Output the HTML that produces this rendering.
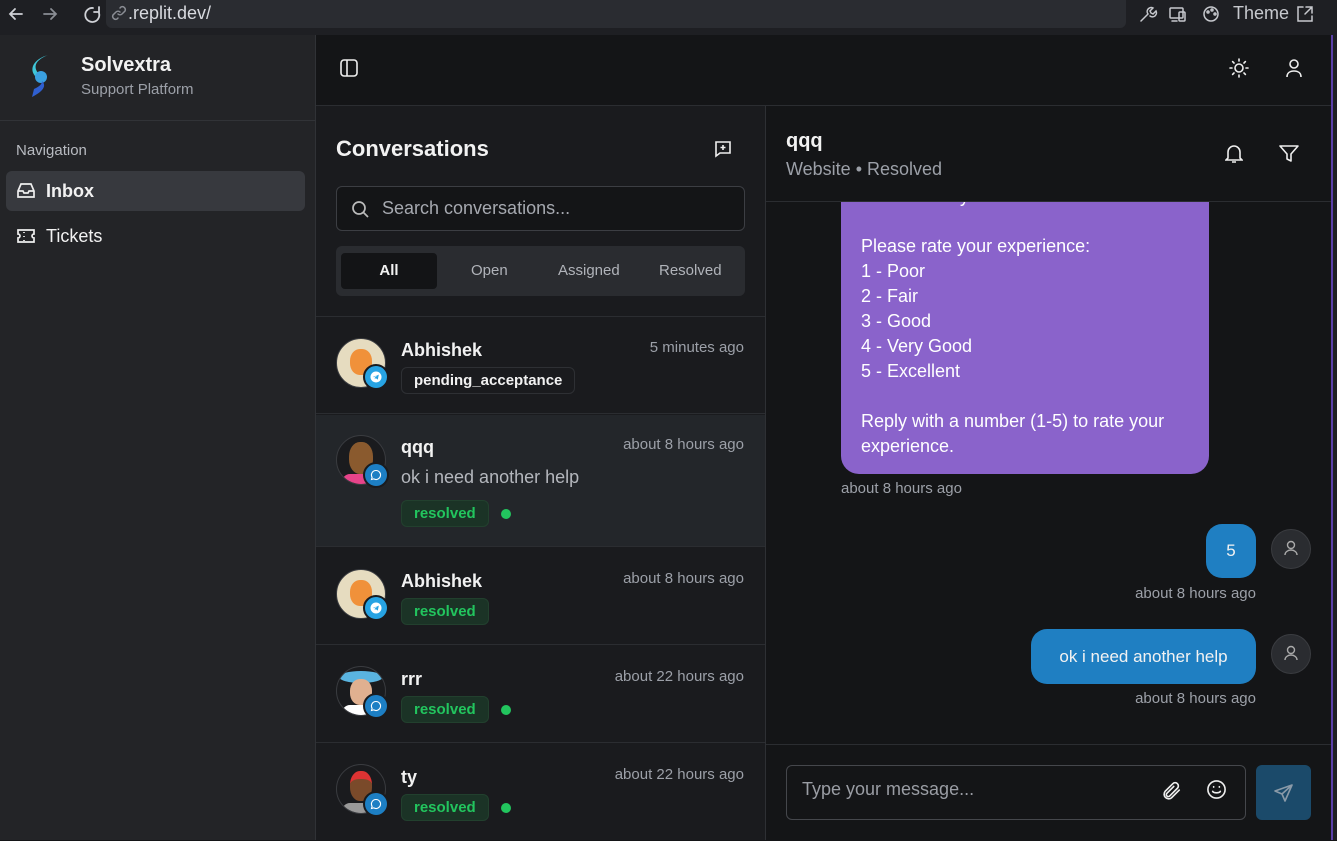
<!DOCTYPE html>
<html><head><meta charset="utf-8"><style>
*{box-sizing:border-box;margin:0;padding:0}
body{width:1337px;height:840px;overflow:hidden;background:#141517;font-family:"Liberation Sans",sans-serif;color:#f2f2f2;position:relative}
.abs{position:absolute}
svg{display:block}
.muted{color:#9ca0a8}
.badge{position:absolute;border:1px solid #2e3034;border-radius:6px;font-weight:bold;font-size:15px;padding:0 12px;height:27px;line-height:25px}
.res{background:#1b3326;border-color:#22402e;color:#22c55e}
.dot{position:absolute;width:10px;height:10px;border-radius:50%;background:#22c55e}
.av{position:absolute;width:50px;height:50px;border-radius:50%;border:1px solid #3a3c40;overflow:hidden}
.ch{position:absolute;width:26px;height:26px;border-radius:50%;background:#1d7fc4;border:2px solid #1a1b1e}
.ch svg{position:absolute;left:5px;top:5px}
.tg{background:#27a3e3}
.row .name{position:absolute;font-size:18px;font-weight:bold}
.row .time{position:absolute;right:21px;font-size:15px;color:#9ca0a8}
</style></head><body>
<svg width="0" height="0" style="position:absolute"><defs>
<symbol id="tg" viewBox="0 0 12 12"><circle cx="6" cy="6" r="5.5" fill="#fff"/><path d="M2.8 6l6-2.4-1 5-2-1.5-1 1v-1.5l3-2.5-3.8 2z" fill="#27a3e3"/></symbol>
<symbol id="cb" viewBox="0 0 12 12"><path d="M6 1.5a4.5 4.5 0 1 1-2.2 8.4L1.5 10.5l.6-2.2A4.5 4.5 0 0 1 6 1.5z" fill="none" stroke="#fff" stroke-width="1.1"/></symbol>
</defs></svg>
<!-- browser bar -->
<div class="abs" style="left:0;top:0;width:1337px;height:35px;background:#1e1f23"></div>
<div class="abs" style="left:106px;top:0;width:1020px;height:28px;background:#2a2c31;border-radius:0 0 6px 6px"></div>
<svg class="abs" style="left:6px;top:4px" width="110" height="20" viewBox="0 0 110 20" fill="none" stroke="#cfd1d6" stroke-width="1.8" stroke-linecap="round"><path d="M16 10H4M9 5L4 10l5 5"/><path d="M38 10h12M45 5l5 5-5 5" stroke="#8a8d94"/><path d="M87 4a7 7 0 1 0 6 5M93 3v5h-5"/></svg>
<svg class="abs" style="left:111px;top:5px" width="16" height="16" viewBox="0 0 16 16" fill="none" stroke="#8a8d94" stroke-width="1.5" stroke-linecap="round"><path d="M7 9a3 3 0 0 0 4 0l3-3a3 3 0 0 0-4-4l-1 1M9 7a3 3 0 0 0-4 0L2 10a3 3 0 0 0 4 4l1-1"/></svg>
<div class="abs" style="left:128px;top:3px;font-size:18px;color:#d8dadf">.replit.dev/</div>
<svg class="abs" style="left:1138px;top:4px" width="180" height="20" viewBox="0 0 180 20" fill="none" stroke="#c7c9ce" stroke-width="1.5" stroke-linecap="round"><path d="M3 17l7-7M10 10a4 4 0 0 1 5-6l-3 3 1 2 2 1 3-3a4 4 0 0 1-6 5"/><rect x="32" y="4" width="13" height="10" rx="1"/><path d="M34 17h5"/><rect x="41" y="8" width="6" height="9" rx="1"/><circle cx="73" cy="10" r="7"/><circle cx="70" cy="8" r="1"/><circle cx="74" cy="6" r="1"/><circle cx="77" cy="10" r="1"/><path d="M165 3h-5v14h14v-5M168 3h6v6M174 3l-7 7"/></svg>
<div class="abs" style="left:1233px;top:3px;font-size:18px;color:#c7c9ce">Theme</div>
<!-- sidebar -->
<div class="abs" style="left:0;top:35px;width:316px;height:805px;background:#232427;border-right:1px solid #303236"></div>
<svg class="abs" style="left:28px;top:55px" width="24" height="44" viewBox="0 0 24 44"><path d="M20 0C10 4 4 10 10 18L8 22C0 14 6 4 20 0Z" fill="#3fc6d8"/><circle cx="13" cy="22" r="6" fill="#3aa0e0"/><path d="M14 26c6 6-2 12-10 16l2-8c4-2 8-4 8-8z" fill="#2f5fd0"/></svg>
<div class="abs" style="left:81px;top:54px;font-size:20px;font-weight:bold">Solvextra</div>
<div class="abs muted" style="left:81px;top:81px;font-size:15px">Support Platform</div>
<div class="abs" style="left:0;top:120px;width:316px;height:1px;background:#313337"></div>
<div class="abs muted" style="left:16px;top:142px;font-size:15px;color:#b8bbc1">Navigation</div>
<div class="abs" style="left:6px;top:171px;width:299px;height:40px;background:#37393e;border-radius:6px"></div>
<svg class="abs" style="left:16px;top:182px" width="20" height="18" viewBox="0 0 20 18" fill="none" stroke="#eee" stroke-width="1.7"><path d="M2 9l3-7h10l3 7v6H2zM2 9h5l1 2h4l1-2h5"/></svg>
<div class="abs" style="left:46px;top:181px;font-size:18px;font-weight:bold">Inbox</div>
<svg class="abs" style="left:16px;top:227px" width="20" height="18" viewBox="0 0 20 18" fill="none" stroke="#eee" stroke-width="1.7"><path d="M2 3h16v4a2 2 0 0 0 0 4v4H2v-4a2 2 0 0 0 0-4zM8 5v1M8 9v1M8 13v1"/></svg>
<div class="abs" style="left:46px;top:226px;font-size:18px">Tickets</div>
<!-- top header -->
<div class="abs" style="left:316px;top:105px;width:1015px;height:1px;background:#2b2d31"></div>
<svg class="abs" style="left:340px;top:59px" width="18" height="18" viewBox="0 0 18 18" fill="none" stroke="#eee" stroke-width="1.6"><rect x="1" y="1" width="16" height="16" rx="3"/><path d="M7 1v16"/></svg>
<svg class="abs" style="left:1229px;top:58px" width="20" height="20" viewBox="0 0 20 20" fill="none" stroke="#eee" stroke-width="1.6" stroke-linecap="round"><circle cx="10" cy="10" r="4"/><path d="M10 1v2M10 17v2M1 10h2M17 10h2M3.6 3.6l1.4 1.4M15 15l1.4 1.4M3.6 16.4L5 15M15 5l1.4-1.4"/></svg>
<svg class="abs" style="left:1285px;top:58px" width="18" height="20" viewBox="0 0 18 20" fill="none" stroke="#eee" stroke-width="1.6"><circle cx="9" cy="6" r="4"/><path d="M2 19c0-4 3-6 7-6s7 2 7 6"/></svg>
<!-- conversation panel -->
<div class="abs" style="left:316px;top:106px;width:450px;height:734px;background:#1a1b1e;border-right:1px solid #2e3034"></div>
<div class="abs" style="left:336px;top:136px;font-size:22px;font-weight:bold">Conversations</div>
<svg class="abs" style="left:713px;top:139px" width="20" height="20" viewBox="0 0 20 20" fill="none" stroke="#eee" stroke-width="1.6"><path d="M3 3h14v11H7l-4 3z"/><path d="M10 6v5M7.5 8.5h5"/></svg>
<div class="abs" style="left:336px;top:186px;width:409px;height:45px;border:1px solid #3c3e43;border-radius:6px;background:#141517"></div>
<svg class="abs" style="left:351px;top:200px" width="18" height="18" viewBox="0 0 18 18" fill="none" stroke="#bbb" stroke-width="1.7"><circle cx="8" cy="8" r="6"/><path d="M12.5 12.5L17 17"/></svg>
<div class="abs muted" style="left:382px;top:198px;font-size:18px;color:#a6a9b0">Search conversations...</div>
<div class="abs" style="left:336px;top:246px;width:409px;height:50px;background:#2a2c30;border-radius:6px"></div>
<div class="abs" style="left:341px;top:253px;width:96px;height:36px;background:#131416;border-radius:4px"></div>
<div class="abs" style="left:341px;top:262px;width:96px;text-align:center;font-size:15px;font-weight:bold">All</div>
<div class="abs muted" style="left:471px;top:262px;font-size:15px;color:#b0b3b9">Open</div>
<div class="abs muted" style="left:558px;top:262px;font-size:15px;color:#b0b3b9">Assigned</div>
<div class="abs muted" style="left:659px;top:262px;font-size:15px;color:#b0b3b9">Resolved</div>
<div class="abs" style="left:316px;top:316px;width:449px;height:1px;background:#2b2d31"></div>
<!-- rows -->
<div class="abs row" style="left:316px;top:317px;width:449px;height:97px;border-bottom:1px solid #2b2d31">
 <div class="av" style="left:20px;top:21px;background:#e6dcc0"><div style="position:absolute;left:13px;top:10px;width:22px;height:26px;border-radius:45%;background:#f0913a"></div></div>
 <div class="ch tg" style="left:47px;top:47px"><svg width="12" height="12"><use href="#tg"/></svg></div>
 <div class="name" style="left:85px;top:23px">Abhishek</div><div class="time" style="top:22px">5 minutes ago</div>
 <div class="badge" style="left:85px;top:50px">pending_acceptance</div></div>
<div class="abs row" style="left:316px;top:415px;width:449px;height:132px;background:#23262a;border-bottom:1px solid #2b2d31">
 <div class="av" style="left:20px;top:20px;background:#1a1b1e"><div style="position:absolute;left:12px;top:6px;width:24px;height:32px;border-radius:45%;background:#8a5a2e"></div><div style="position:absolute;left:5px;top:38px;width:40px;height:14px;background:#e6448a;border-radius:8px 8px 0 0"></div></div>
 <div class="ch" style="left:47px;top:47px"><svg width="12" height="12"><use href="#cb"/></svg></div>
 <div class="name" style="left:85px;top:22px">qqq</div><div class="time" style="top:21px">about 8 hours ago</div>
 <div class="abs" style="left:85px;top:52px;font-size:18px;color:#b4b7bd">ok i need another help</div>
 <div class="badge res" style="left:85px;top:85px">resolved</div><div class="dot" style="left:185px;top:94px"></div></div>
<div class="abs row" style="left:316px;top:548px;width:449px;height:97px;border-bottom:1px solid #2b2d31">
 <div class="av" style="left:20px;top:21px;background:#e6dcc0"><div style="position:absolute;left:13px;top:10px;width:22px;height:26px;border-radius:45%;background:#f0913a"></div></div>
 <div class="ch tg" style="left:47px;top:47px"><svg width="12" height="12"><use href="#tg"/></svg></div>
 <div class="name" style="left:85px;top:23px">Abhishek</div><div class="time" style="top:22px">about 8 hours ago</div>
 <div class="badge res" style="left:85px;top:50px">resolved</div></div>
<div class="abs row" style="left:316px;top:646px;width:449px;height:97px;border-bottom:1px solid #2b2d31">
 <div class="av" style="left:20px;top:20px;background:#1a1b1e"><div style="position:absolute;left:2px;top:4px;width:44px;height:12px;border-radius:50%;background:#5ab4e0"></div><div style="position:absolute;left:13px;top:12px;width:22px;height:26px;border-radius:45%;background:#e0b090"></div><div style="position:absolute;left:5px;top:38px;width:40px;height:14px;background:#fff;border-radius:8px 8px 0 0"></div></div>
 <div class="ch" style="left:47px;top:47px"><svg width="12" height="12"><use href="#cb"/></svg></div>
 <div class="name" style="left:85px;top:23px">rrr</div><div class="time" style="top:22px">about 22 hours ago</div>
 <div class="badge res" style="left:85px;top:50px">resolved</div><div class="dot" style="left:185px;top:59px"></div></div>
<div class="abs row" style="left:316px;top:744px;width:449px;height:97px">
 <div class="av" style="left:20px;top:20px;background:#1a1b1e"><div style="position:absolute;left:13px;top:6px;width:22px;height:30px;border-radius:45%;background:#7a4a2a;border-top:8px solid #d33"></div><div style="position:absolute;left:5px;top:38px;width:40px;height:14px;background:#999;border-radius:8px 8px 0 0"></div></div>
 <div class="ch" style="left:47px;top:47px"><svg width="12" height="12"><use href="#cb"/></svg></div>
 <div class="name" style="left:85px;top:23px">ty</div><div class="time" style="top:22px">about 22 hours ago</div>
 <div class="badge res" style="left:85px;top:50px">resolved</div><div class="dot" style="left:185px;top:59px"></div></div>
<!-- chat header -->
<div class="abs" style="left:786px;top:130px;font-size:20px;font-weight:bold">qqq</div>
<div class="abs muted" style="left:786px;top:159px;font-size:18px">Website • Resolved</div>
<svg class="abs" style="left:1225px;top:144px" width="18" height="20" viewBox="0 0 18 20" fill="none" stroke="#eee" stroke-width="1.6"><path d="M3 14V8a6 6 0 0 1 12 0v6l2 2H1zM7 18h4"/></svg>
<svg class="abs" style="left:1279px;top:145px" width="20" height="18" viewBox="0 0 20 18" fill="none" stroke="#eee" stroke-width="1.6" stroke-linejoin="round"><path d="M1 1h18l-7 8v7l-4-2V9z"/></svg>
<div class="abs" style="left:766px;top:201px;width:565px;height:1px;background:#2b2d31"></div>
<!-- messages -->
<div class="abs" style="left:766px;top:202px;width:565px;height:542px;overflow:hidden">
 <div class="abs" style="left:75px;top:-30px;width:368px;height:302px;background:#8a63cb;border-radius:18px;padding:12px 20px;font-size:18px;line-height:25px;color:#fff">love to hear your feedback!<br><br>Please rate your experience:<br>1 - Poor<br>2 - Fair<br>3 - Good<br>4 - Very Good<br>5 - Excellent<br><br>Reply with a number (1-5) to rate your experience.</div>
 <div class="abs muted" style="left:75px;top:278px;font-size:15px">about 8 hours ago</div>
 <div class="abs" style="left:440px;top:322px;width:50px;height:54px;background:#1f7fc2;border-radius:16px;text-align:center;line-height:54px;font-size:17px">5</div>
 <div class="abs" style="left:505px;top:327px;width:40px;height:40px;border-radius:50%;background:#2a2c30;border:1px solid #3a3c40"></div>
 <div class="abs muted" style="right:75px;top:383px;font-size:15px">about 8 hours ago</div>
 <div class="abs" style="left:265px;top:427px;width:225px;height:55px;background:#1f7fc2;border-radius:16px;text-align:center;line-height:55px;font-size:17px">ok i need another help</div>
 <div class="abs" style="left:505px;top:432px;width:40px;height:40px;border-radius:50%;background:#2a2c30;border:1px solid #3a3c40"></div>
 <div class="abs muted" style="right:75px;top:488px;font-size:15px">about 8 hours ago</div>
</div>
<svg class="abs" style="left:1282px;top:539px" width="18" height="18" viewBox="0 0 18 18" fill="none" stroke="#aaa" stroke-width="1.4"><circle cx="9" cy="6" r="3.5"/><path d="M3 16c0-3 3-5 6-5s6 2 6 5"/></svg>
<svg class="abs" style="left:1282px;top:644px" width="18" height="18" viewBox="0 0 18 18" fill="none" stroke="#aaa" stroke-width="1.4"><circle cx="9" cy="6" r="3.5"/><path d="M3 16c0-3 3-5 6-5s6 2 6 5"/></svg>
<!-- input -->
<div class="abs" style="left:766px;top:744px;width:565px;height:1px;background:#2b2d31"></div>
<div class="abs" style="left:786px;top:765px;width:460px;height:55px;border:1px solid #45474c;border-radius:6px"></div>
<div class="abs muted" style="left:802px;top:779px;font-size:18px;color:#9a9da4">Type your message...</div>
<svg class="abs" style="left:1160px;top:780px" width="22" height="22" viewBox="0 0 24 24" fill="none" stroke="#eee" stroke-width="1.8" stroke-linecap="round"><path d="M21 11l-8.5 8.5a5 5 0 0 1-7-7L14 4a3.5 3.5 0 0 1 5 5l-8.5 8.5a2 2 0 0 1-3-3L15 7"/></svg>
<svg class="abs" style="left:1206px;top:779px" width="21" height="21" viewBox="0 0 22 22" fill="none" stroke="#eee" stroke-width="1.7" stroke-linecap="round"><circle cx="11" cy="11" r="9"/><path d="M7 13c1 2 7 2 8 0M8 8v.5M14 8v.5"/></svg>
<div class="abs" style="left:1256px;top:765px;width:55px;height:55px;background:#1b4a6a;border-radius:6px"></div>
<svg class="abs" style="left:1274px;top:783px" width="20" height="20" viewBox="0 0 20 20" fill="none" stroke="#8a9aa8" stroke-width="1.6" stroke-linejoin="round"><path d="M18 2L1 8l7 3 3 7zM18 2L8 11"/></svg>
<div class="abs" style="left:1331px;top:35px;width:2px;height:805px;background:#5a3fa8"></div>
<div class="abs" style="left:1333px;top:35px;width:4px;height:805px;background:#1e1f23"></div>
</body></html>
